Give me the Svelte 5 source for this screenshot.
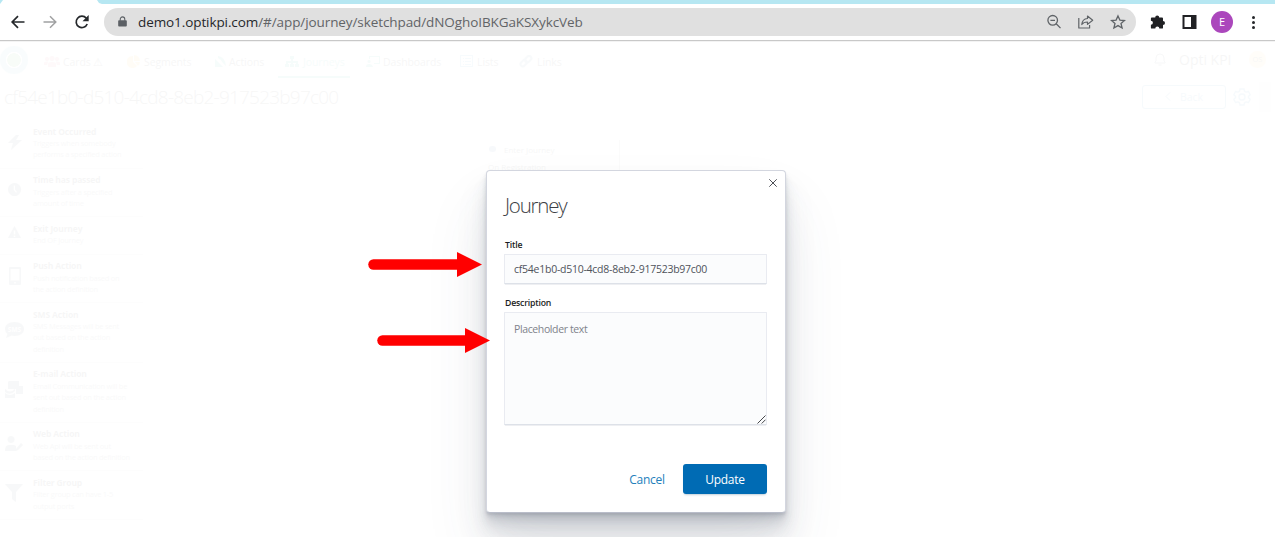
<script>
  const tabs = [
    { name: 'Cards ⚠', icon: 'users', color: '#f06a80', left: 44, text: 19 },
    { name: 'Segments', icon: 'pie', color: '#ffc928', left: 127, text: 17 },
    { name: 'Actions', icon: 'signal', color: '#22b8a0', left: 214, text: 15 },
    { name: 'Journeys', icon: 'tree', color: '#22b8a0', left: 285, text: 18, active: true },
    { name: 'Dashboards', icon: 'board', color: '#22b8a0', left: 366, text: 17 },
    { name: 'Lists', icon: 'list', color: '#4a9ad0', left: 460, text: 17 },
    { name: 'Links', icon: 'link', color: '#5080b0', left: 519, text: 18 }
  ];

  const nodes = [
    { title: 'Event Occurred', icon: 'bolt', lines: ['Triggers when somebody', 'performs a specified action'] },
    { title: 'Time has passed', icon: 'clock', lines: ['Triggers after a specified', 'amount of time'] },
    { title: 'Exit Journey', icon: 'warn', lines: ['End OF Journey'] },
    { title: 'Push Action', icon: 'phone', lines: ['Push notification based on', 'the action definition'] },
    { title: 'SMS Action', icon: 'sms', lines: ['SMS Messages will be sent', 'out based on the action', 'definition'] },
    { title: 'E-mail Action', icon: 'mail', lines: ['Email Communication will be', 'sent out based on the action', 'definition'] },
    { title: 'Web Action', icon: 'user', lines: ['Web Api will be sent out', 'based on the action definition'] },
    { title: 'Filter Group', icon: 'filter', lines: ['Filter group can have 1-5', 'output ports'] }
  ];

  const shapes = {
    bolt: 'M11 3 3 11h5l-2 7 11-10h-6l3-5z',
    clock: 'M9.500 3a6.500 6.500 0 1 0 .1 0zM8.700 5.500h1.300v4l2 2.500-1 .8-2.300-2.800z',
    warn: 'M9.500 3 16 15H3zM8.700 7.500v4h1.600v-4zM8.700 12.500v1.500h1.600v-1.500z',
    phone: 'M5 1h10q1 0 1 1v16q0 1-1 1H5q-1 0-1-1V2q0-1 1-1zM5.500 3v11.500h9V3zM9.200 16v1.500h1.600V16z',
    mail: 'M4 1h10v5h4v8h-7V9H3V2zM0 9q5 5 10 0v2q-5 5-10 1zM0 13q5 4 10 0v5H0z',
    user: 'M6 2a3.500 3.500 0 1 0 .1 0zM0 17q0-6 4-6h5l2 1v5zM11 15l5-6 2 2-5 5-2 1z',
    filter: 'M0 1h18l-7 8v10l-4-3V9z',
    users: 'M8 1a2.500 2.500 0 1 0 .1 0zM3 2a2 2 0 1 0 .1 0zM13 2a2 2 0 1 0 .1 0zM4 12V9q0-2 4-2t4 2v3zM0 10V8q0-1.500 4-1.500L3 10zM16 10V8q0-1.500-4-1.500L13 10z',
    pie: 'M6 1v6l4 4a6 6 0 1 1-4-10zM7 0a6 6 0 0 1 6 6H7zM8 7h5a6 6 0 0 1-2 4z',
    signal: 'M1 12V4l8 8zM4 1q7 1 8 10l-3-3Q7 4 4 3z',
    tree: 'M5 1h4v3H8v2h5v3h1v3h-4V9h1V8H8v1h1v3H5V9h1V8H3v1h1v3H0V9h1V6h5V4H5z',
    board: 'M3 1h11v8H8V8h5V2H4v2H3zM3 5a1.500 1.500 0 1 0 .1 0zM0 12q0-3 3-3t4 3z',
    list: 'M0 0h13v12H0zM1 1v10h11V1zM3 3h1v1H3zM5 3h6v1H5zM3 6h1v1H3zM5 6h6v1H5zM3 9h1v1H3zM5 9h6v1H5z'
  };
</script>

<div class="window">
  <div class="tabstrip"></div>
  <header class="toolbar">
    <svg class="tool back" viewBox="0 0 16 16"><path d="M14.500 8H2.500M8 2.200 2.200 8 8 13.800" fill="none" stroke="#25282b" stroke-width="1.700" /></svg>
    <svg class="tool forward" viewBox="0 0 16 16"><path d="M1.500 8h12M8 2.200 13.800 8 8 13.800" fill="none" stroke="#a0a1a2" stroke-width="1.500" /></svg>
    <svg class="tool reload" viewBox="0 0 16 16"><path d="M13.200 10A5.700 5.700 0 1 1 12.300 4.300" fill="none" stroke="#25282b" stroke-width="1.700" /><path d="M14.700 1v6.200H8.500z" fill="#25282b" /></svg>
    <div class="address">
      <svg class="lock" viewBox="0 0 10 13"><path d="M1.200 4.500h7.600q1 0 1 1v5q0 1-1 1H1.200q-1 0-1-1v-5q0-1 1-1z" fill="#5c6065" /><path d="M2.500 5V3.300a2.500 2.500 0 0 1 5 0V5" fill="none" stroke="#5c6065" stroke-width="1.200" /></svg>
      <span class="url"><b>demo1.optikpi.com</b>/#/app/journey/sketchpad/dNOghoIBKGaKSXykcVeb</span>
      <span class="grow"></span>
      <svg class="act zoomout" viewBox="0 0 16 16" fill="none" stroke="#5f6367" stroke-width="1.300"><circle cx="6.700" cy="6.300" r="4.800" /><path d="m10.200 9.800 4.300 4.300M4.400 6.300H9" /></svg>
      <svg class="act share" viewBox="0 0 16 16" fill="none" stroke="#5f6367" stroke-width="1.200"><path d="M.8 4v10h10.800v-3M9.500 2l5.200 4.200-5.200 4.200V8Q5.500 8 3.800 10.500 4.200 5 9.500 4.500z" stroke-linejoin="round" /></svg>
      <svg class="act star" viewBox="0 0 16 16"><path d="m8 1.900 1.900 4.200 4.600.4-3.500 3 1.100 4.500L8 11.600 3.900 14 5 9.500l-3.500-3 4.600-.4z" fill="none" stroke="#5f6367" stroke-width="1.300" /></svg>
    </div>
    <svg class="puzzle" viewBox="0 0 16 16"><path d="M1.800 3.500h3.400a2 2 0 0 1 4 0h2.900q.9 0 .9.9v2.700a2 2 0 0 1 0 4v2.600q0 .9-.9.900H9.300a2 2 0 0 0-4 0H1.800q-.9 0-.9-.9v-2.900a2 2 0 0 0 0-4V4.400q0-.9.9-.9z" fill="#202124" /></svg>
    <svg class="panel" viewBox="0 0 14 14"><path d="M0 0h14v14H0zM2 2v10h6.500V2z" fill="#202124" fill-rule="evenodd" /></svg>
    <span class="avatar">E</span>
    <span class="dots"><i></i><i></i><i></i></span>
  </header>

  <main>
    <div class="app">
      <nav>
        <span class="brand"></span>
        <span class="tabs">
          {#each tabs as tab}
            <span class="tab" class:active={tab.active} style:left="{tab.left}px">
              <svg width="16" height="13" viewBox="0 0 16 13">
                {#if tab.icon === 'link'}
                  <g fill="none" stroke={tab.color} stroke-width="2"><rect x="1" y="6" width="7" height="4.500" rx="2.200" transform="rotate(-45 4.500 8)" /><rect x="5.500" y="2" width="7" height="4.500" rx="2.200" transform="rotate(-45 9 4)" /></g>
                {:else}
                  <path d={shapes[tab.icon]} fill={tab.color} fill-rule="evenodd" />
                {/if}
              </svg>
              <span class="tabname" style:margin-left="{tab.text - 16}px">{tab.name}</span>
            </span>
          {/each}
        </span>
        <svg class="bell" viewBox="0 0 12 13"><path d="M1 10V9l1-1V5q0-4 4-4t4 4v3l1 1v1zM4.500 12h3" fill="none" stroke="#456" /></svg>
        <span class="company">Opti KPI</span>
        <span class="initials">OS</span>
      </nav>
      <div class="heading">
        <h1>cf54e1b0-d510-4cd8-8eb2-917523b97c00</h1>
        <span class="backbtn"><svg width="6" height="9" viewBox="0 0 6 9"><path d="M5 .5 1 4.500l4 4" fill="none" stroke="#2685c2" /></svg>Back</span>
        <svg class="gear" viewBox="0 0 18 18" fill="none" stroke="#2685c2" stroke-width="1.300"><path d="M7 1h4l.6 2.300 1.500.8 2.300-.6 1.800 3.300-1.700 1.600v1.300l1.700 1.600-1.800 3.200-2.300-.6-1.500.8L11 17H7l-.6-2.300-1.500-.8-2.300.6-1.800-3.200 1.700-1.600V8.400L.8 6.800l1.800-3.300 2.300.6 1.500-.8z" /><circle cx="9" cy="9" r="3" /></svg>
        <span class="scroller"></span>
      </div>
      <section class="sketchpad">
        <aside>
          {#each nodes as node}
            <article>
              <svg class="nodeicon" viewBox="0 0 19 20">
                {#if node.icon === 'sms'}
                  <path d="M9.500 2C15 2 19 5 19 9s-4 7-9.500 7l-3-.4L1 18l1.500-4Q0 12 0 9c0-4 4-7 9.500-7z" fill="#456" />
                  <text x="9.500" y="11.500" font-size="6.500" font-weight="700" text-anchor="middle" fill="#fff">SMS</text>
                {:else}
                  <path d={shapes[node.icon]} fill="#456" fill-rule="evenodd" />
                {/if}
              </svg>
              <div><h3>{node.title}</h3>{#each node.lines as line}<p>{line}</p>{/each}</div>
            </article>
          {/each}
        </aside>
        <div class="canvas">
          <div class="node"><strong>Enter Journey</strong><span>On Registration</span></div>
        </div>
      </section>
    </div>

    <div class="modal">
      <svg class="close" viewBox="0 0 10 10"><path d="m1.300 1.300 7.400 7.400m0-7.400L1.300 8.700" stroke="#4c4f56" stroke-width="1" /></svg>
      <h2>Journey</h2>
      <label for="title">Title</label>
      <input id="title" value="cf54e1b0-d510-4cd8-8eb2-917523b97c00" />
      <label for="description" class="second">Description</label>
      <div class="area">
        <textarea id="description" placeholder="Placeholder text"></textarea>
        <svg class="grip" viewBox="0 0 9 9"><path d="M.5 8.500l8-8M4.700 8.500l3.800-3.800" stroke="#45474b" stroke-width="1" /></svg>
      </div>
      <footer><button class="cancel">Cancel</button><button class="update">Update</button></footer>
    </div>

    <svg class="arrow first" viewBox="0 0 115 26"><path d="M5.500 13.500H91" stroke="red" stroke-width="10.500" stroke-linecap="round" /><path d="M89 1 114 13.500 89 26z" fill="red" /></svg>
    <svg class="arrow last" viewBox="0 0 115 26"><path d="M5.500 13.500H91" stroke="red" stroke-width="10.500" stroke-linecap="round" /><path d="M88 1 113 13.500 88 26z" fill="red" /></svg>
  </main>
</div>

<style>
  :global(body) { margin: 0; overflow: hidden; }
  * { box-sizing: border-box; }
  svg { display: block; flex: none; }
  .window { width: 1275px; height: 537px; overflow: hidden; display: flex; flex-direction: column; background: #fff; font-family: "Open Sans", "Noto Sans", sans-serif; }
  .tabstrip { height: 4px; flex: none; background: #b6e7f2; display: flex; }
  .tabstrip::before { content: ""; width: 102px; background: #fff; clip-path: polygon(3px 0, 97px 0, 99px 3px, 102px 4px, 0 4px); }
  .toolbar { height: 37px; flex: none; display: flex; align-items: center; border-bottom: 1px solid #c8c8c8; box-shadow: 0 1px #f3f3f3; }
  .tool { width: 16px; height: 16px; }
  .back { margin-left: 10px; }
  .forward { margin-left: 16px; }
  .reload { margin-left: 16px; }
  .address { width: 1032px; height: 28px; margin-left: 14px; border-radius: 14px; background: #e0e0e0; display: flex; align-items: center; }
  .lock { width: 9px; height: 12px; margin-left: 13.500px; }
  .url { margin-left: 11.500px; font-size: 13.500px; line-height: 20px; letter-spacing: -.09px; color: #626467; white-space: nowrap; }
  .url b { font-weight: 400; color: #25272a; }
  .grow { flex: 1; }
  .act { width: 16px; height: 16px; }
  .share { margin-left: 16px; }
  .star { margin: 0 10px 0 16px; }
  .puzzle { width: 16px; height: 16px; margin-left: 14px; }
  .panel { width: 15px; height: 14px; margin-left: 16px; }
  .avatar { width: 22px; height: 22px; margin-left: 14px; border-radius: 50%; background: #ab47bc; color: #fff; font-size: 11px; line-height: 22px; text-align: center; }
  .dots { margin-left: 19px; display: grid; gap: 2px; }
  .dots i { width: 3px; height: 3px; border-radius: 50%; background: #25272a; }
  main { position: relative; flex: 1; }
  .app { height: 496px; opacity: .035; color: #1a1c21; }
  nav { height: 37px; display: flex; align-items: center; }
  .brand { width: 28px; height: 28px; border-radius: 50%; background: radial-gradient(circle, #5cb85c 6.500px, #fff 7px 8px, #6cc6de 8.500px); }
  .tabs { position: relative; height: 36px; width: 1126px; }
  .tab { position: absolute; height: 35px; margin-left: -28px; display: flex; align-items: center; padding-top: 5px; font-size: 10.500px; letter-spacing: -.1px; white-space: nowrap; }
  .tabname { padding-top: 1px; }
  .tab.active { color: #22b8a0; }
  .tab.active::after { content: ""; position: absolute; left: -7px; bottom: -1px; width: 72px; height: 2px; background: #22b8a0; }
  .bell { width: 12px; height: 13px; }
  .company { margin-left: 13px; width: 70px; font-size: 14px; letter-spacing: 0; white-space: nowrap; }
  .initials { width: 17px; height: 17px; border-radius: 50%; background: #ffd56b; font-size: 7.500px; line-height: 17px; text-align: center; }
  .heading { height: 36px; display: flex; align-items: center; padding-top: 1px; }
  h1 { margin: 0 0 0 4px; width: 1138px; font-size: 19px; font-weight: 300; letter-spacing: -.78px; }
  .backbtn { width: 84px; height: 24px; border: 1px solid #2685c2; border-radius: 3px; color: #2685c2; font-size: 10.500px; display: flex; align-items: center; justify-content: center; gap: 9px; }
  .gear { width: 18px; height: 18px; margin-left: 7px; }
  .scroller { width: 12px; height: 30px; margin-left: 8px; background: #e8e8e8; }
  .sketchpad { height: 423px; display: flex; }
  aside { width: 144px; padding-top: 10.500px; }
  article { width: 143px; display: grid; grid-template-columns: 33px 110px; align-items: center; padding-bottom: 7px; margin-bottom: 4.400px; border-bottom: 1px solid #ddd; }
  .nodeicon { width: 19px; height: 20px; margin: -2px 0 0 5px; }
  h3 { margin: 0; font-size: 8.500px; line-height: 14.500px; height: 13.600px; font-weight: 700; letter-spacing: -.15px; white-space: nowrap; }
  p { margin: 0; color: #6a6d76; font-size: 7.500px; line-height: 11.300px; letter-spacing: -.25px; white-space: nowrap; }
  .canvas { flex: 1; padding: 26px 0 0 344px; }
  .node { width: 132px; padding: 1px 0; display: grid; font-size: 8px; border-right: 1px solid #aaa; }
  .node strong { font-weight: 400; margin-left: 16px; line-height: 17px; }
  .node strong::before { content: ""; float: left; width: 7px; height: 6px; margin: 5px 0 0 -15px; border-radius: 50%; background: #36a; }
  .node span { line-height: 17px; }
  .modal { position: absolute; left: 486px; top: 129px; width: 300px; height: 343px; padding: 18px 18px 0 19px; background: #fff; border: 1px solid #d3d6df; border-bottom-color: #b9bdc9; border-radius: 4px; box-shadow: 0 40px 64px rgba(65,78,101,.1), 0 24px 32px rgba(65,78,101,.1), 0 16px 16px rgba(65,78,101,.1), 0 8px 8px rgba(65,78,101,.1), 0 4px 4px rgba(65,78,101,.1), 0 2px 2px rgba(65,78,101,.1); }
  .close { position: absolute; left: 281px; top: 7px; width: 10px; height: 10px; }
  h2 { margin: 0 0 0 -1px; font-size: 20.500px; line-height: 32px; font-weight: 300; letter-spacing: -1.200px; color: #3c3e44; }
  label { display: block; margin: 18px 0 0 -1px; line-height: 13px; font-size: 8.700px; font-weight: 600; letter-spacing: -.18px; color: #1a1c21; }
  label.second { margin-top: 13px; }
  input, textarea { display: block; width: 263px; margin: 2px 0 0 -2px; border: 1px solid #e9ebf1; border-bottom-color: #dde1e8; border-radius: 1px; background: #fbfcfd; outline: 0; padding: 0 9px; font: 10.500px/16px "Open Sans", "Noto Sans", sans-serif; color: #50535b; letter-spacing: -.25px; resize: none; box-shadow: 0 1px 1px -1px #98a2b3; }
  input { height: 30px; margin-top: 2px; }
  textarea { height: 113px; padding-top: 8px; }
  textarea::placeholder { color: #80838b; opacity: 1; letter-spacing: -.38px; }
  .area { position: relative; }
  .grip { position: absolute; right: 1px; bottom: 1px; width: 9px; height: 9px; }
  footer { display: flex; justify-content: flex-end; margin-top: 39px; }
  button { border: 0; padding: 1px 0 0; font: 12px/29px "Open Sans", "Noto Sans", sans-serif; letter-spacing: -.25px; background: transparent; height: 30px; }
  .cancel { width: 72px; color: #2380bc; }
  .update { width: 84px; border-radius: 3px; background: #006bb4; color: #fff; box-shadow: 0 2px 2px -1px rgba(54,97,126,.3); }
  .arrow { position: absolute; width: 115px; height: 26px; }
  .first { left: 368px; top: 210px; }
  .last { left: 377px; top: 286px; }
</style>
